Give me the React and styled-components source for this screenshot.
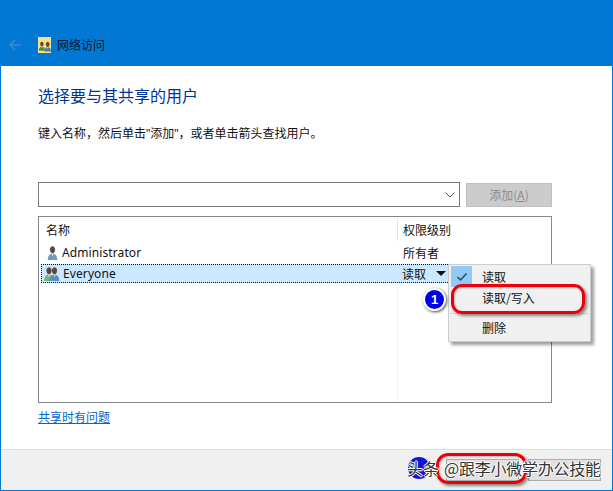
import React from "react";
import styled, { createGlobalStyle } from "styled-components";

const Global = createGlobalStyle`
  html, body { margin: 0; padding: 0; background: #fff; }
  #root { width: 613px; height: 491px; }
  * { box-sizing: border-box; }
`;
const FONT = `"Noto Sans CJK SC", "Noto Sans", sans-serif`;
const Win = styled.div`
  position: relative; width: 613px; height: 491px; display: flex; flex-direction: column;
  font-family: ${FONT}; font-size: 12px; color: #111; background: #fff; overflow: hidden;
  border-left: 1px solid #0078d7; border-right: 1px solid #0078d7; border-bottom: 1px solid #0078d7;
`;
const Header = styled.header`
  height: 66px; background: #0078d4; display: flex; align-items: flex-end; padding: 0 0 12px 7px; flex: none;
`;
const Back = styled.svg`width: 14px; height: 14px; margin-bottom: 2px; margin-right: 16px;`;
const HeaderIcon = styled.svg`width: 14px; height: 16px; margin-right: 5px; margin-bottom: 1px;`;
const HeaderTitle = styled.span`font-size: 12px; line-height: 18px; color: #0a1a2a;`;
const Body = styled.main`flex: 1; padding: 18px 60px 0 37px; display: flex; flex-direction: column; min-height: 0;`;
const Heading = styled.h1`margin: 0; font-size: 16px; line-height: 22px; font-weight: 400; color: #003399;`;
const Desc = styled.p`margin: 19px 0 0; font-family: "Liberation Sans", ${FONT}; font-size: 12px; line-height: 18px; color: #111;`;
const AddRow = styled.div`display: flex; gap: 6px; margin-top: 39px; height: 25px; align-items: stretch;`;
const Combo = styled.div`
  flex: none; width: 422px; border: 1px solid #7a7a7a; background: #fff; display: flex; align-items: center; justify-content: flex-end; padding-right: 3px;
`;
const AddBtn = styled.button`
  flex: none; width: 86px; height: 24px; margin-top: 1px; background: #cccccc; border: 1px solid #bfbfbf; color: #8b8b8b; padding: 0;
  font: 12px/20px ${FONT};
  u { text-underline-offset: 1px; }
`;
const List = styled.div`
  margin-top: 9px; height: 187px; width: 514px; border: 1px solid #828790; background: #fff; padding: 1px; display: flex; flex-direction: column;
`;
const HeadRow = styled.div`display: grid; grid-template-columns: 351px 1fr; height: 23px; align-items: center; padding-left: 6px;`;
const HeadCell = styled.div`
  font-size: 12px; line-height: 18px; height: 23px; display: flex; align-items: center;
  &:last-child { border-left: 1px solid #e5e5e5; padding-left: 5px; }
`;
const Row = styled.div`
  display: grid; grid-template-columns: ${p => (p.$selected ? "354px" : "351px")} 1fr; height: ${p => (p.$selected ? "19px" : "23px")}; align-items: center; padding-left: ${p => (p.$selected ? "2px" : "6px")};
  background: ${p => (p.$selected ? "#cce8ff" : "transparent")};
  outline: ${p => (p.$selected ? "1px dotted #111" : "none")}; outline-offset: -1px; margin-left: ${p => (p.$selected ? "1px" : "0")};
  font-size: 12px;
`;
const NameCell = styled.div`display: flex; align-items: center; gap: 3px; font-family: "Noto Sans", sans-serif; font-size: 12px; letter-spacing: .1px;`;
const PermCell = styled.div`display: flex; align-items: center; padding-left: ${p => p.$pad}px; gap: 10px;`;
const Caret = styled.span`width: 0; height: 0; border-left: 5px solid transparent; border-right: 5px solid transparent; border-top: 5px solid #111;`;
const Spacer = styled.div`flex: 1; margin-left: 357px; border-left: 1px solid #f2f2f2;`;
const Help = styled.a`margin-top: 5px; font-size: 12px; line-height: 18px; color: #0066cc; text-decoration: underline; width: max-content;`;
const Footer = styled.footer`
  height: 41px; flex: none; background: #f0f0f0; border-top: 1px solid #dfdfdf; display: flex; justify-content: flex-end; align-items: center; gap: 9px; padding: 0 11px 0 0;
`;
const FootBtn = styled.button`width: 73px; height: 22px; background: #e1e1e1; border: 1px solid #adadad; padding: 0; color: transparent; font: 12px/18px ${FONT};`;
const Menu = styled.div`
  position: absolute; left: 447px; top: 264px; width: 143px; height: 78px; background: #f0f0f0; border: 1px solid #ccc;
  box-shadow: 3px 3px 3px rgba(0,0,0,.38); padding: 1px; display: flex; flex-direction: column;
`;
const MenuItem = styled.div`
  height: ${p => p.$h}px; display: flex; align-items: center; padding: 0 0 ${p => p.$pb || 0}px 32px; position: relative; font-size: 12px;
  border-bottom: ${p => (p.$sep ? "1px solid #d7d7d7" : "none")};
`;
const CheckBox = styled.span`
  position: absolute; left: 1px; top: 0; width: 21px; height: 21px; background: #90c8f6; display: flex; align-items: center; justify-content: center;
`;
const Ring = styled.div`
  position: absolute; left: 450px; top: 284px; width: 134px; height: 30px; border: 3px solid #e8000c; border-radius: 11px;
  box-shadow: 2px 2px 3px rgba(0,0,0,.45), inset 1px 1px 2px rgba(0,0,0,.25);
`;
const FootRing = styled(Ring)`left: 435px; top: 453px; width: 91px; height: 31px; border-radius: 12px;`;
const Badge = styled.div`
  position: absolute; left: 422px; top: 288px; width: 23px; height: 23px; border-radius: 50%; background: #0000e6; border: 2px solid #fff;
  box-shadow: 1px 1px 3px rgba(0,0,0,.7); color: #fff; font: 700 13px/19px "Liberation Sans", sans-serif; text-align: center;
`;
const Mark = styled.div`
  position: absolute; left: 406px; top: 457px; display: flex; align-items: center; color: #333; font-size: 16px; line-height: 22px; white-space: nowrap; letter-spacing: -.25px;
  text-shadow: 1px 0 0 #fff, -1px 0 0 #fff, 0 1px 0 #fff, 0 -1px 0 #fff;
`;
const MarkHead = styled.span`
  position: relative; display: inline-block; width: 37px; letter-spacing: 0;
  &::before { content: ""; position: absolute; left: 1px; top: 0; width: 22px; height: 22px; border-radius: 50%; background: #1212d8; z-index: -1; }
`;
const MarkLayer = styled.div`position: absolute; inset: 0; z-index: 3; isolation: isolate; pointer-events: none;`;
const UserIcon = styled.svg`width: ${p => p.$w}px; height: 16px; flex: none;`;

const Person = ({ x = 0, c = "#4a7fb5", s = 1 }) => (
  <g transform={`translate(${x} 0) scale(${s})`}>
    <path d="M3.400 4.600C3.400 2.600 4.600 1.200 6 1.200s2.600 1.400 2.600 3.400S7.400 8.400 6 8.400 3.400 6.600 3.400 4.600z" fill="#5b4a3c" />
    <path d="M1.200 15c0-4 2-6.500 4.800-6.500s4.800 2.500 4.800 6.500z" fill={c} />
    <path d="M5 8.500h2l-1 3z" fill="#e6e6e6" />
  </g>
);

export default function App() {
  return (
    <Win>
      <Global />
      <Header>
        <Back viewBox="0 0 14 14"><path d="M13 7H2M7 2 2 7l5 5" fill="none" stroke="#3f87c9" strokeWidth="1.7" /></Back>
        <HeaderIcon viewBox="0 0 14 16">
          <rect width="13" height="16" fill="#fbe08a" />
          <g transform="translate(0 4)"><Person c="#4c8a4a" s=".65" /><Person x="5.5" c="#4a7fb5" s=".7" /></g>
        </HeaderIcon>
        <HeaderTitle>网络访问</HeaderTitle>
      </Header>
      <Body>
        <Heading>选择要与其共享的用户</Heading>
        <Desc>键入名称，然后单击"添加"，或者单击箭头查找用户。</Desc>
        <AddRow>
          <Combo><svg width="12" height="8" viewBox="0 0 12 8"><path d="M1.5 1.5 6 6l4.5-4.5" fill="none" stroke="#555" strokeWidth="1" /></svg></Combo>
          <AddBtn>添加(<u>A</u>)</AddBtn>
        </AddRow>
        <List>
          <HeadRow><HeadCell>名称</HeadCell><HeadCell>权限级别</HeadCell></HeadRow>
          <Row>
            <NameCell><UserIcon $w={13} viewBox="0 0 12 16"><Person c="#6d9ac8" /></UserIcon>Administrator</NameCell>
            <PermCell $pad={6}>所有者</PermCell>
          </Row>
          <Row $selected>
            <NameCell><UserIcon $w={17} viewBox="0 0 17 16"><Person c="#7ab06a" /><Person x="5.5" c="#5a8fc5" /></UserIcon>Everyone</NameCell>
            <PermCell $pad={5}>读取<Caret /></PermCell>
          </Row>
          <Spacer />
        </List>
        <Help>共享时有问题</Help>
      </Body>
      <Footer><FootBtn>共享(H)</FootBtn><FootBtn>取消</FootBtn></Footer>
      <Menu>
        <MenuItem $h={20}>
          <CheckBox><svg width="12" height="10" viewBox="0 0 12 10"><path d="M1.5 5 4.500 8l6-6.500" fill="none" stroke="#27425e" strokeWidth="1.4" /></svg></CheckBox>
          读取
        </MenuItem>
        <MenuItem $h={28} $pb={4} $sep>读取/写入</MenuItem>
        <MenuItem $h={26}>删除</MenuItem>
      </Menu>
      <Ring />
      <Badge>1</Badge>
      <FootRing />
      <MarkLayer>
        <Mark><MarkHead>头条</MarkHead>@跟李小微学办公技能</Mark>
      </MarkLayer>
    </Win>
  );
}
